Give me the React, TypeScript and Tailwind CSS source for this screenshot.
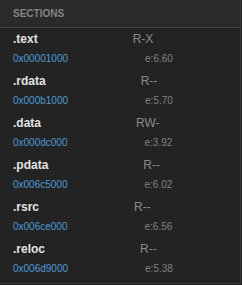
import React from "react";

const sections = [
  { name: ".text", perm: "R-X", addr: "0x00001000", e: "6.60" },
  { name: ".rdata", perm: "R--", addr: "0x000b1000", e: "5.70" },
  { name: ".data", perm: "RW-", addr: "0x000dc000", e: "3.92" },
  { name: ".pdata", perm: "R--", addr: "0x006c5000", e: "6.02" },
  { name: ".rsrc", perm: "R--", addr: "0x006ce000", e: "6.56" },
  { name: ".reloc", perm: "R--", addr: "0x006d9000", e: "5.38" },
];

export default function App() {
  return (
    <div
      className="w-[242px] h-[285px] bg-[#1c1c1c] overflow-hidden"
      style={{ fontFamily: '"Liberation Sans", Arial, sans-serif' }}
    >
      <div className="w-[241px] h-[284px] bg-[#232323] border-r border-b border-[#3a3a3a] flex flex-col">
        <div className="h-[28px] shrink-0 bg-[#2a2a2a] border-b border-[#414141] flex items-center pl-[13px]">
          <span className="text-[10px] leading-[14px] font-bold text-[#858585]">SECTIONS</span>
        </div>
        <div className="flex flex-col">
          {sections.map((s) => (
            <div key={s.name} className="pt-[3px] pb-[4px] pl-[13px] flex flex-col gap-[5px]">
              <div className="flex items-center h-[16px]">
                <span className="text-[12px] leading-[16px] font-bold text-[#e2e2e2]">{s.name}</span>
                <span className="ml-[95px] text-[12px] leading-[16px] text-[#8a8a8a]">{s.perm}</span>
              </div>
              <div className="flex items-center h-[14px]">
                <span className="text-[10px] leading-[14px] text-[#4f9bd6]">{s.addr}</span>
                <span className="ml-[77px] text-[10px] leading-[14px] text-[#808080]">e:{s.e}</span>
              </div>
            </div>
          ))}
        </div>
      </div>
    </div>
  );
}
